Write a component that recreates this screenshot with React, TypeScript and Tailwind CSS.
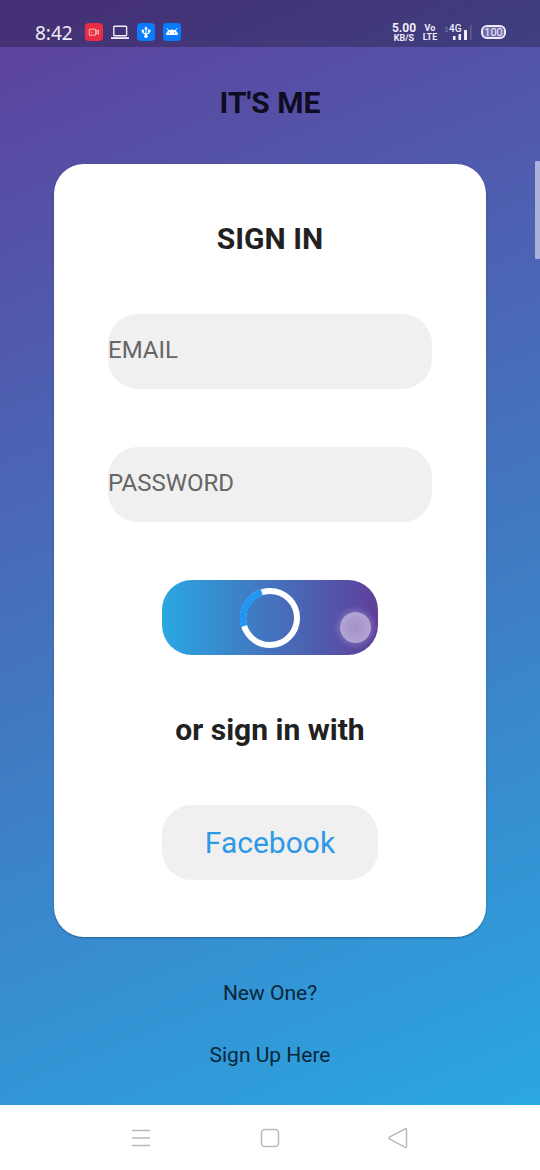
import { type FormEvent } from 'react';

function StatusBar() {
  return (
    <header className="flex h-[47px] items-end justify-between bg-black/25 pl-[35px] pr-[34px] pb-1 text-[#f1edf9]">
      <div className="flex h-[22px] items-center gap-2">
        <time className="mr-1 w-[38px] whitespace-nowrap pt-[2px] font-['Noto_Sans',sans-serif] text-[19px] leading-[22px]">8:42</time>
        <svg className="h-[18px] w-[18px]" viewBox="0 0 18 18" role="img" aria-label="Screen recording">
          <rect width="18" height="18" rx="4" fill="#e92d42" />
          <path d="M4.300 6.200h6.400v6H4.300zM10.700 8h1.100l1.700-1v4.400l-1.700-1h-1.100M6 9.200h1.500M11.800 8v2.400" fill="none" stroke="#ffc4ca" strokeWidth=".9" />
        </svg>
        <svg className="h-[18px] w-[18px]" viewBox="0 0 18 18" fill="none" stroke="currentColor" role="img" aria-label="Computer connected">
          <rect x="2.800" y="3.200" width="12.800" height="9.600" rx=".8" strokeWidth="1.400" />
          <path d="M0 15.100h18" strokeWidth="1.800" />
        </svg>
        <svg className="h-[18px] w-[18px]" viewBox="0 0 18 18" role="img" aria-label="USB">
          <rect width="18" height="18" rx="4" fill="#087cff" />
          <path d="M9 5v8M5.800 8v1.600L9 11.500l3.200-1.900V8" fill="none" stroke="white" strokeWidth="1.200" />
          <path d="M9 3.200 7 6.200h4z" fill="white" />
          <circle cx="5.800" cy="7.800" r="1.300" fill="white" />
          <rect x="11" y="6.600" width="2.400" height="2.400" fill="white" />
          <circle cx="9" cy="13.200" r="1.700" fill="white" />
        </svg>
        <svg className="h-[18px] w-[18px]" viewBox="0 0 18 18" role="img" aria-label="Android">
          <rect width="18" height="18" rx="4" fill="#087cff" />
          <path d="M3 12a6 5.600 0 0 1 12 0z" fill="white" />
          <path d="m4.300 5.600 1.600 2.400M13.700 5.600l-1.600 2.400" stroke="white" strokeLinecap="round" />
          <circle cx="6.400" cy="9.800" r=".6" fill="#087cff" />
          <circle cx="11.600" cy="9.800" r=".6" fill="#087cff" />
        </svg>
      </div>
      <div className="flex h-[22px] items-center font-bold">
        <div className="flex w-[22px] flex-col items-center whitespace-nowrap">
          <span className="text-[12px] leading-[12px]">5.00</span>
          <span className="text-[9px] leading-[9px]">KB/S</span>
        </div>
        <div className="ml-2 flex w-[14px] flex-col items-center whitespace-nowrap pt-px text-[9px] leading-[9px]">
          <span>Vo</span>
          <span>LTE</span>
        </div>
        <div className="ml-2 grid w-[28px] grid-cols-1 grid-rows-1 pt-[2px]">
          <svg className="col-start-1 row-start-1 h-[18px] w-[28px]" viewBox="0 0 28 18" fill="currentColor" role="img" aria-label="Signal">
            <path d="M0 3h3v2H0zM0 6h3v2H0z" opacity=".2" />
            <path d="M8 12h2.500v4H8zM13.500 10H16v6h-2.500zM19 6h3v10h-3z" />
            <path d="M25 1h1.500v15H25z" opacity=".2" />
          </svg>
          <span className="col-start-1 row-start-1 pl-1 text-[10px] font-medium leading-[10px]">4G</span>
        </div>
        <span className="ml-2 flex h-[14px] w-[25px] items-center justify-center rounded-[6px] border-2 border-[#eeeaf8] bg-[#716cab] pt-px text-[11px] font-normal leading-[10px]">100</span>
      </div>
    </header>
  );
}

function Spinner() {
  return (
    <svg className="h-[60px] w-[60px]" viewBox="0 0 60 60" fill="none" strokeWidth="6" role="img" aria-label="Loading">
      <circle cx="30" cy="30" r="27" stroke="white" />
      <path d="M4.200 38A27 27 0 0 1 21.800 4.300" stroke="#2196f3" strokeWidth="6.400" />
    </svg>
  );
}

function Field({ label, type }: { label: string; type: string }) {
  return (
    <input
      type={type}
      aria-label={label}
      placeholder={label}
      className="h-[75px] w-3/4 rounded-[30px] bg-[#f0f0f0] pb-[3px] text-[24px] text-[#212121] outline-none placeholder:text-[#666666] placeholder:opacity-100"
    />
  );
}

function SystemNavigation() {
  return (
    <nav aria-label="System" className="flex h-[65px] items-center justify-center gap-[104px] bg-white text-[#b9b9b9]">
      <button type="button" aria-label="Recent apps">
        <svg className="h-6 w-6" viewBox="0 0 24 24" fill="none" stroke="currentColor" strokeWidth="1.500">
          <path d="M2 4.500h18M2 12h18M2 19.500h18" />
        </svg>
      </button>
      <button type="button" aria-label="Home">
        <svg className="h-6 w-6" viewBox="0 0 24 24" fill="none" stroke="currentColor" strokeWidth="1.500">
          <rect x="3.500" y="3.500" width="17" height="17" rx="3.500" />
        </svg>
      </button>
      <button type="button" aria-label="Back">
        <svg className="h-6 w-6" viewBox="0 0 24 24" fill="none" stroke="currentColor" strokeWidth="1.500">
          <path d="M20.500 4v16.200q0 1.800-1.600 1L3.800 13.200q-1.800-1.200 0-2.400L18.900 3q1.600-.8 1.600 1Z" />
        </svg>
      </button>
    </nav>
  );
}

export default function App() {
  return (
    <div className="flex min-h-screen flex-col font-[Roboto,sans-serif]">
      <div className="relative flex flex-1 flex-col bg-[linear-gradient(158deg,#5e3f9b_0%,#2aa7e1_100%)]">
        <StatusBar />
        <main className="flex flex-1 flex-col items-center pt-[39px]">
          <h1 className="text-[30px] font-bold leading-[34px] text-[#0d0c20]">IT&apos;S ME</h1>
          <form
            onSubmit={(event: FormEvent) => event.preventDefault()}
            className="mt-11 flex w-4/5 flex-col items-center gap-[58px] rounded-[30px] bg-white pt-[58px] pb-[57px] shadow-[0_1px_2px_rgba(0,0,0,0.3)]"
          >
            <h2 className="text-[30px] font-bold leading-[34px] text-[#212121]">SIGN IN</h2>
            <Field label="EMAIL" type="email" />
            <Field label="PASSWORD" type="password" />
            <button
              type="submit"
              aria-label="Sign in"
              className="relative flex h-[75px] w-1/2 items-center justify-center rounded-[30px] bg-[linear-gradient(90deg,#2aa7e1,#5e3f9b)]"
            >
              <Spinner />
              <span className="absolute right-[7px] bottom-3 h-[31px] w-[31px] rounded-full bg-[radial-gradient(circle,#a390c8,#b8acd6)] shadow-[0_0_5px_3px_rgba(190,170,220,0.3)]" />
            </button>
            <p className="text-[30px] font-bold leading-[34px] text-[#212121]">or sign in with</p>
            <button type="button" className="h-[75px] w-1/2 rounded-[30px] bg-[#f0f0f0] text-[30px] text-[#2f98e7]">Facebook</button>
          </form>
          <p className="mt-11 text-[21px] leading-[25px] text-[#09263a]">New One?</p>
          <a href="#sign-up" className="mt-[37px] text-[21px] leading-[25px] text-[#09263a]">Sign Up Here</a>
        </main>
        <span className="absolute right-0 top-[161px] h-[98px] w-[5px] rounded-[1px] bg-[#acb1dc]" />
      </div>
      <SystemNavigation />
    </div>
  );
}
